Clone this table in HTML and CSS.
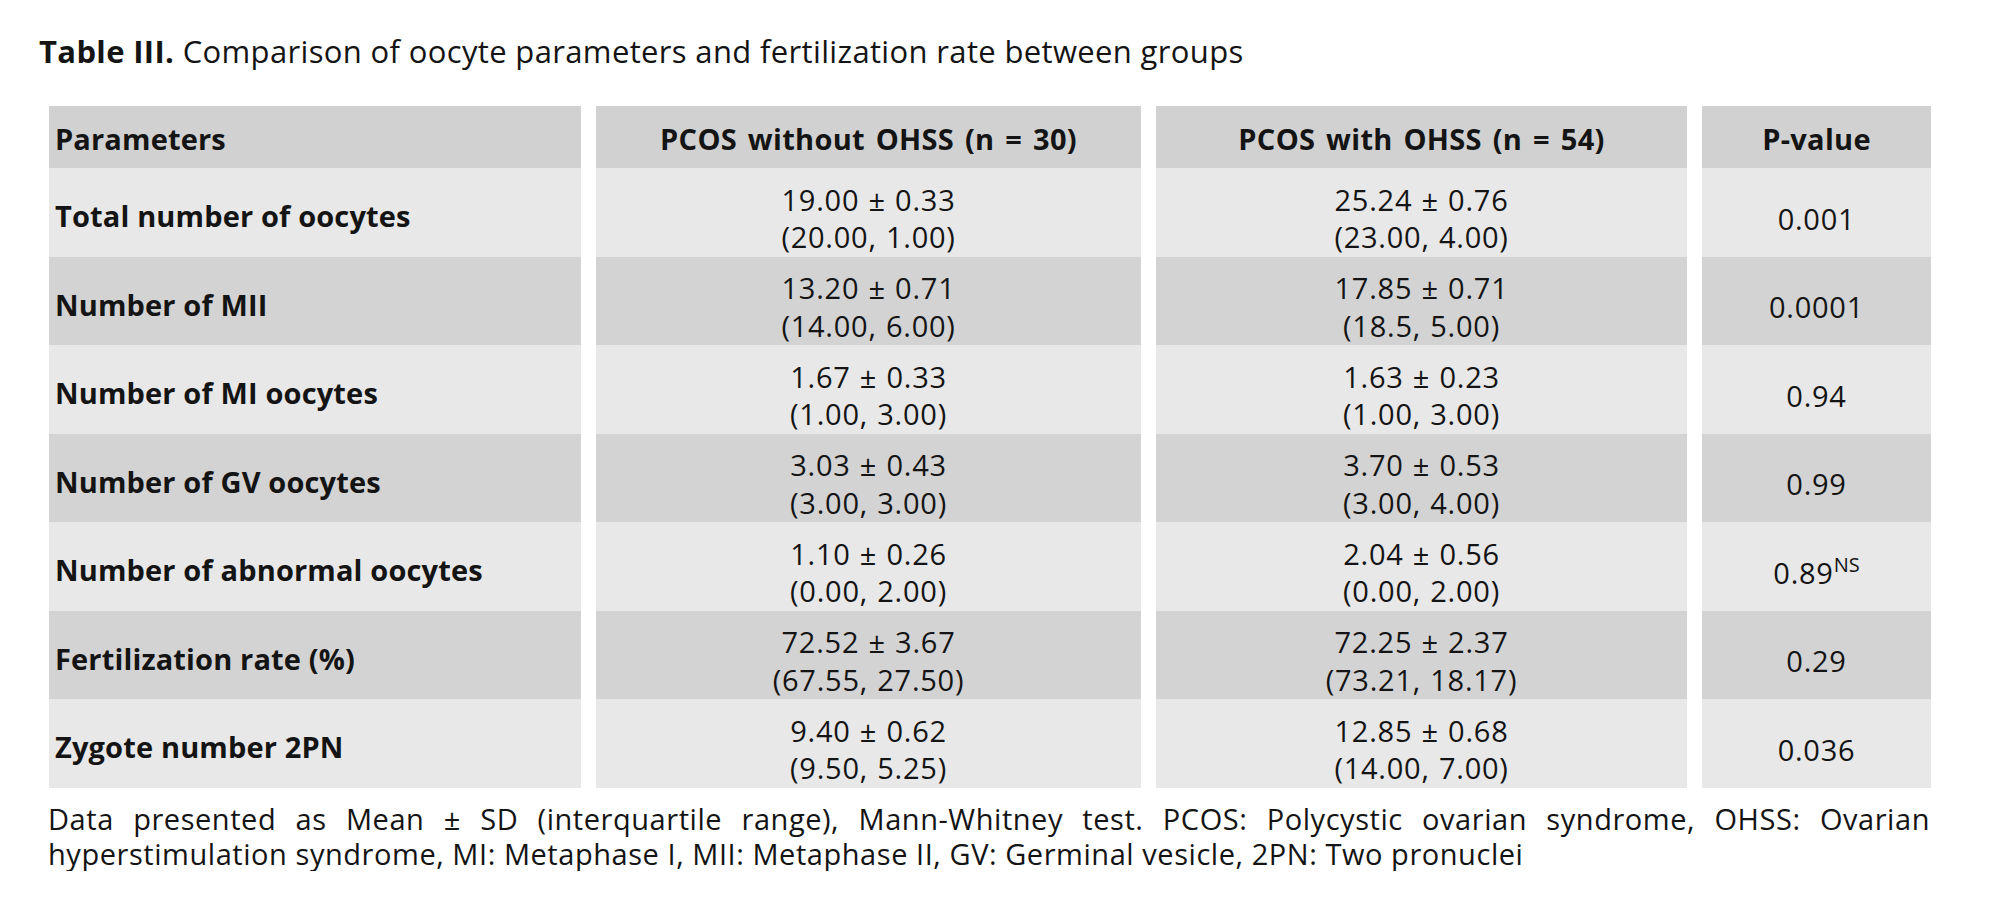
FILE: index.html
```html
<!DOCTYPE html>
<html lang="en">
<head>
<meta charset="utf-8">
<title>Table III</title>
<link rel="stylesheet" href="styles.css">
</head>
<body>
<div class="page">
  <h1 class="caption"><b>Table III.</b> Comparison of oocyte parameters and fertilization rate between groups</h1>
  <table class="data">
    <colgroup>
      <col class="c-param">
      <col class="c-g1">
      <col class="c-g2">
      <col class="c-p">
    </colgroup>
    <thead>
      <tr>
        <th class="left">Parameters</th>
        <th>PCOS without OHSS (n = 30)</th>
        <th>PCOS with OHSS (n = 54)</th>
        <th>P-value</th>
      </tr>
    </thead>
    <tbody>
      <tr class="light">
        <td class="label">Total number of oocytes</td>
        <td>19.00 ± 0.33<br>(20.00, 1.00)</td>
        <td>25.24 ± 0.76<br>(23.00, 4.00)</td>
        <td>0.001</td>
      </tr>
      <tr class="dark">
        <td class="label">Number of MII</td>
        <td>13.20 ± 0.71<br>(14.00, 6.00)</td>
        <td>17.85 ± 0.71<br>(18.5, 5.00)</td>
        <td>0.0001</td>
      </tr>
      <tr class="light">
        <td class="label">Number of MI oocytes</td>
        <td>1.67 ± 0.33<br>(1.00, 3.00)</td>
        <td>1.63 ± 0.23<br>(1.00, 3.00)</td>
        <td>0.94</td>
      </tr>
      <tr class="dark">
        <td class="label">Number of GV oocytes</td>
        <td>3.03 ± 0.43<br>(3.00, 3.00)</td>
        <td>3.70 ± 0.53<br>(3.00, 4.00)</td>
        <td>0.99</td>
      </tr>
      <tr class="light">
        <td class="label">Number of abnormal oocytes</td>
        <td>1.10 ± 0.26<br>(0.00, 2.00)</td>
        <td>2.04 ± 0.56<br>(0.00, 2.00)</td>
        <td>0.89<sup class="ns">NS</sup></td>
      </tr>
      <tr class="dark">
        <td class="label">Fertilization rate (%)</td>
        <td>72.52 ± 3.67<br>(67.55, 27.50)</td>
        <td>72.25 ± 2.37<br>(73.21, 18.17)</td>
        <td>0.29</td>
      </tr>
      <tr class="light">
        <td class="label">Zygote number 2PN</td>
        <td>9.40 ± 0.62<br>(9.50, 5.25)</td>
        <td>12.85 ± 0.68<br>(14.00, 7.00)</td>
        <td>0.036</td>
      </tr>
    </tbody>
  </table>
  <p class="note">
    <span class="note-line justified">Data presented as Mean ± SD (interquartile range), Mann-Whitney test. PCOS: Polycystic ovarian syndrome, OHSS: Ovarian</span>
    <span class="note-line">hyperstimulation syndrome, MI: Metaphase I, MII: Metaphase II, GV: Germinal vesicle, 2PN: Two pronuclei</span>
  </p>
</div>
</body>
</html>
```
FILE: styles.css
```css
html, body {
  margin: 0;
  padding: 0;
  background: #ffffff;
}

body {
  font-family: "Open Sans", Lato, "Liberation Sans", sans-serif;
  color: #141414;
}

.page {
  width: 1882px;
  padding: 0 0 0 49px;
}

.caption {
  margin: 0 0 0 -10px;
  padding-top: 33px;
  height: 106px;
  box-sizing: border-box;
  font-size: 31px;
  line-height: 36px;
  letter-spacing: 0.35px;
  font-weight: 400;
  white-space: nowrap;
}

.caption b {
  font-weight: 700;
}

.data {
  border-collapse: separate;
  border-spacing: 15px 0;
  margin: 0 -15px;
  width: 1912px;
  table-layout: fixed;
}

.c-param { width: 532px; }
.c-g1 { width: 545px; }
.c-g2 { width: 531px; }
.c-p { width: 229px; }

.data th {
  background: #d1d1d1;
  height: 62px;
  padding: 3px 6px 0;
  box-sizing: border-box;
  font-size: 29px;
  line-height: 36px;
  font-weight: 700;
  word-spacing: 3px;
  letter-spacing: 0.3px;
  text-align: center;
  vertical-align: middle;
  white-space: nowrap;
}

.data th.left {
  text-align: left;
  letter-spacing: 0.15px;
}

.data td {
  height: 88.5px;
  padding: 12px 6px 0;
  box-sizing: border-box;
  font-size: 29px;
  line-height: 37.5px;
  letter-spacing: 0.75px;
  word-spacing: 1px;
  text-align: center;
  vertical-align: middle;
  white-space: nowrap;
}

.data td.label {
  text-align: left;
  font-weight: 700;
  letter-spacing: 0.15px;
  word-spacing: 0;
  padding-top: 7px;
}

.light td {
  background: #e8e8e8;
}

.dark td {
  background: #d3d3d3;
}

.ns {
  font-size: 20px;
  letter-spacing: 0;
  vertical-align: 12px;
  line-height: 0;
}

.note {
  margin: 0 0 0 -1px;
  padding-top: 13px;
  width: 1882px;
  font-size: 29px;
  line-height: 35px;
  letter-spacing: 0.55px;
}

.note-line {
  display: block;
}

.note-line.justified {
  text-align: justify;
  text-align-last: justify;
  white-space: nowrap;
}
```
